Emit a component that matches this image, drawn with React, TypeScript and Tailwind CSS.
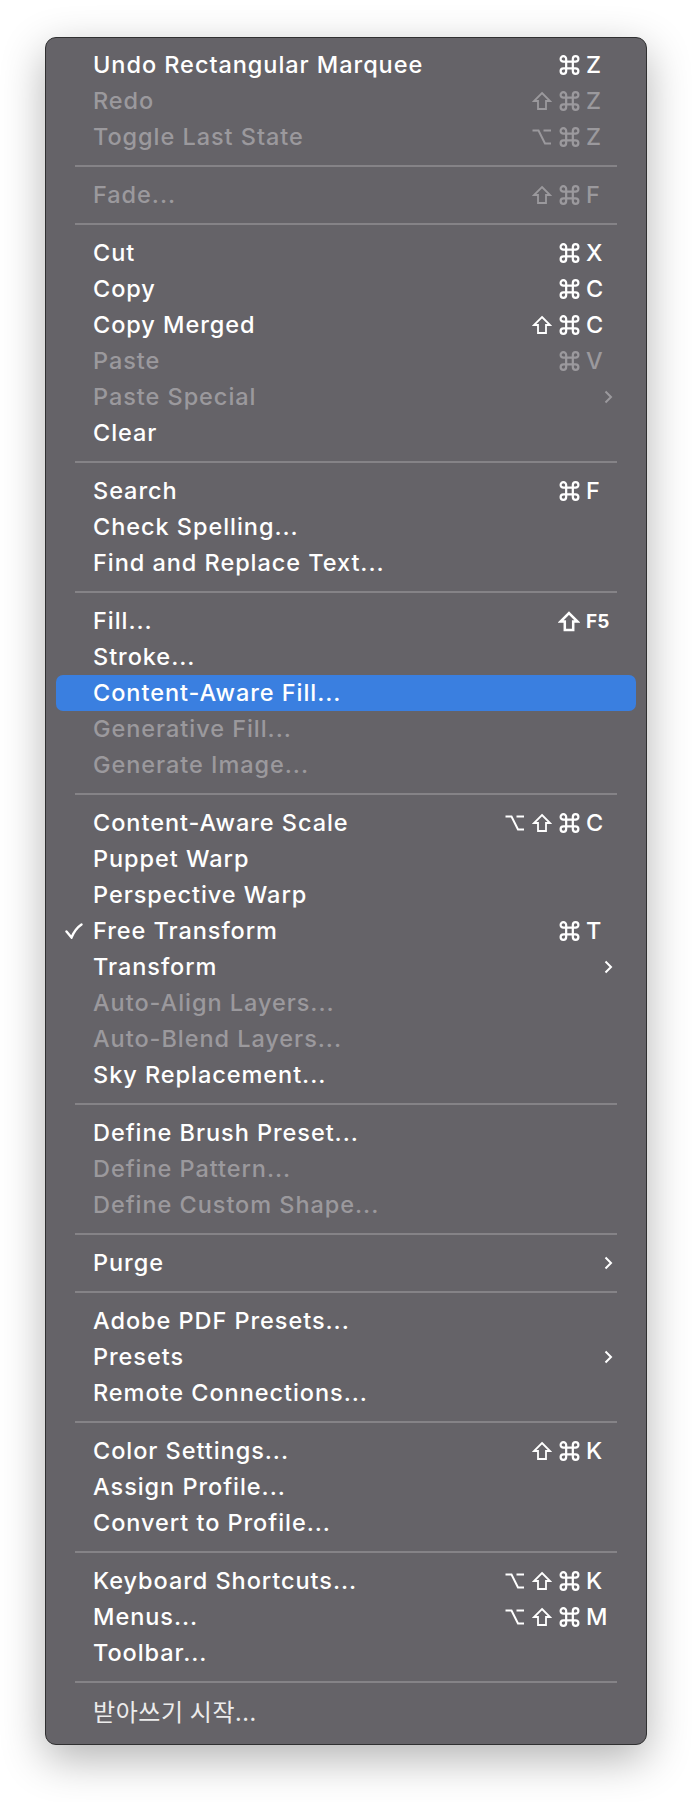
type Mod = 'opt' | 'shift' | 'cmd'

type Item = {
  label: string
  mods?: Mod[]
  keyChar?: string
  fnKey?: boolean
  disabled?: boolean
  submenu?: boolean
  checked?: boolean
  active?: boolean
  korean?: boolean
}

const sections: Item[][] = [
  [
    { label: 'Undo Rectangular Marquee', mods: ['cmd'], keyChar: 'Z' },
    { label: 'Redo', mods: ['shift', 'cmd'], keyChar: 'Z', disabled: true },
    { label: 'Toggle Last State', mods: ['opt', 'cmd'], keyChar: 'Z', disabled: true },
  ],
  [{ label: 'Fade...', mods: ['shift', 'cmd'], keyChar: 'F', disabled: true }],
  [
    { label: 'Cut', mods: ['cmd'], keyChar: 'X' },
    { label: 'Copy', mods: ['cmd'], keyChar: 'C' },
    { label: 'Copy Merged', mods: ['shift', 'cmd'], keyChar: 'C' },
    { label: 'Paste', mods: ['cmd'], keyChar: 'V', disabled: true },
    { label: 'Paste Special', submenu: true, disabled: true },
    { label: 'Clear' },
  ],
  [
    { label: 'Search', mods: ['cmd'], keyChar: 'F' },
    { label: 'Check Spelling...' },
    { label: 'Find and Replace Text...' },
  ],
  [
    { label: 'Fill...', mods: ['shift'], keyChar: 'F5', fnKey: true },
    { label: 'Stroke...' },
    { label: 'Content-Aware Fill...', active: true },
    { label: 'Generative Fill...', disabled: true },
    { label: 'Generate Image...', disabled: true },
  ],
  [
    { label: 'Content-Aware Scale', mods: ['opt', 'shift', 'cmd'], keyChar: 'C' },
    { label: 'Puppet Warp' },
    { label: 'Perspective Warp' },
    { label: 'Free Transform', mods: ['cmd'], keyChar: 'T', checked: true },
    { label: 'Transform', submenu: true },
    { label: 'Auto-Align Layers...', disabled: true },
    { label: 'Auto-Blend Layers...', disabled: true },
    { label: 'Sky Replacement...' },
  ],
  [
    { label: 'Define Brush Preset...' },
    { label: 'Define Pattern...', disabled: true },
    { label: 'Define Custom Shape...', disabled: true },
  ],
  [{ label: 'Purge', submenu: true }],
  [
    { label: 'Adobe PDF Presets...' },
    { label: 'Presets', submenu: true },
    { label: 'Remote Connections...' },
  ],
  [
    { label: 'Color Settings...', mods: ['shift', 'cmd'], keyChar: 'K' },
    { label: 'Assign Profile...' },
    { label: 'Convert to Profile...' },
  ],
  [
    { label: 'Keyboard Shortcuts...', mods: ['opt', 'shift', 'cmd'], keyChar: 'K' },
    { label: 'Menus...', mods: ['opt', 'shift', 'cmd'], keyChar: 'M' },
    { label: 'Toolbar...' },
  ],
  [{ label: '받아쓰기 시작...', korean: true }],
]

function ModIcon({ mod, big }: { mod: Mod; big?: boolean }) {
  if (mod === 'cmd') {
    return (
      <svg viewBox="1 1 18 18" className="h-[20px] w-[21px]" fill="none" stroke="currentColor" strokeWidth={2}>
        <path d="M7 7V4.5A2.5 2.5 0 1 0 4.5 7H15.5A2.5 2.5 0 1 0 13 4.5V15.5A2.5 2.5 0 1 0 15.5 13H4.5A2.5 2.5 0 1 0 7 15.5Z" />
      </svg>
    )
  }
  if (mod === 'shift') {
    return (
      <svg
        viewBox="0 0 20 20"
        className={big ? 'h-[21px] w-[22px]' : 'h-[20px] w-[20px]'}
        fill="none"
        stroke="currentColor"
        strokeWidth={big ? 2.4 : 1.8}
        strokeLinejoin="miter"
      >
        <path d="M10 2L18 10H14V18H6V10H2Z" />
      </svg>
    )
  }
  return (
    <svg viewBox="0 0 20 20" className="h-[20px] w-[21px]" fill="none" stroke="currentColor" strokeWidth={2}>
      <path d="M1 3.5H7L13.5 16.5H19.5M12 3.5H19.5" />
    </svg>
  )
}

function Chevron() {
  return (
    <svg viewBox="0 0 9 14" className="h-[14px] w-[9px]" fill="none" stroke="currentColor" strokeWidth={2}>
      <path d="M1.5 1.5L7 7L1.5 12.5" />
    </svg>
  )
}

function Check() {
  return (
    <svg viewBox="0 0 18 16" className="h-[16px] w-[18px]" fill="none" stroke="currentColor" strokeWidth={2.4} strokeLinecap="round">
      <path d="M1.5 8.5L6.5 14.5C9 8.5 12 4.5 16.5 1.5" />
    </svg>
  )
}

function Row({ item }: { item: Item }) {
  const color = item.disabled ? 'text-[#9b999d]' : item.korean ? 'text-[#ececec]' : 'text-white'
  return (
    <div
      className={`mx-[10px] flex h-[36px] items-center rounded-[7px] pl-[9px] ${color} ${
        item.active ? 'bg-[#3a7fe0]' : ''
      } ${item.korean ? 'mt-[9px]' : ''}`}
    >
      <div className="flex w-[28px] items-center">{item.checked && <Check />}</div>
      <span
        className={
          item.korean
            ? "text-[24px] font-[family-name:'Noto_Sans_CJK_KR',sans-serif] leading-none tracking-[0.6px]"
            : 'text-[23.5px] font-medium leading-none tracking-[0.95px]'
        }
      >
        {item.label}
      </span>
      {item.mods && (
        <div className="ml-auto flex items-center">
          <div className="flex items-center gap-[7px]">
            {item.mods.map((m) => (
              <ModIcon key={m} mod={m} big={item.fnKey} />
            ))}
          </div>
          <span
            className={
              item.fnKey
                ? 'ml-[6px] w-[50px] text-[19px] font-bold leading-none'
                : 'ml-[6px] w-[50px] text-[23.5px] font-medium leading-none'
            }
          >
            {item.keyChar}
          </span>
        </div>
      )}
      {item.submenu && (
        <div className="ml-auto mr-[23px] flex items-center">
          <Chevron />
        </div>
      )}
    </div>
  )
}

export default function App() {
  return (
    <div className="min-h-[1802px] w-[692px] bg-white pt-[37px] font-[Inter,sans-serif]">
      <div className="ml-[45px] w-[602px] rounded-[11px] border border-[#303031] bg-[#656368] pt-[9px] pb-[15px] shadow-[0_14px_44px_rgba(0,0,0,0.3)]">
        {sections.map((section, i) => (
          <div key={i}>
            {i > 0 && <div className="mx-[29px] my-[10px] h-[2px] bg-[#858387]" />}
            {section.map((item) => (
              <Row key={item.label} item={item} />
            ))}
          </div>
        ))}
      </div>
    </div>
  )
}
